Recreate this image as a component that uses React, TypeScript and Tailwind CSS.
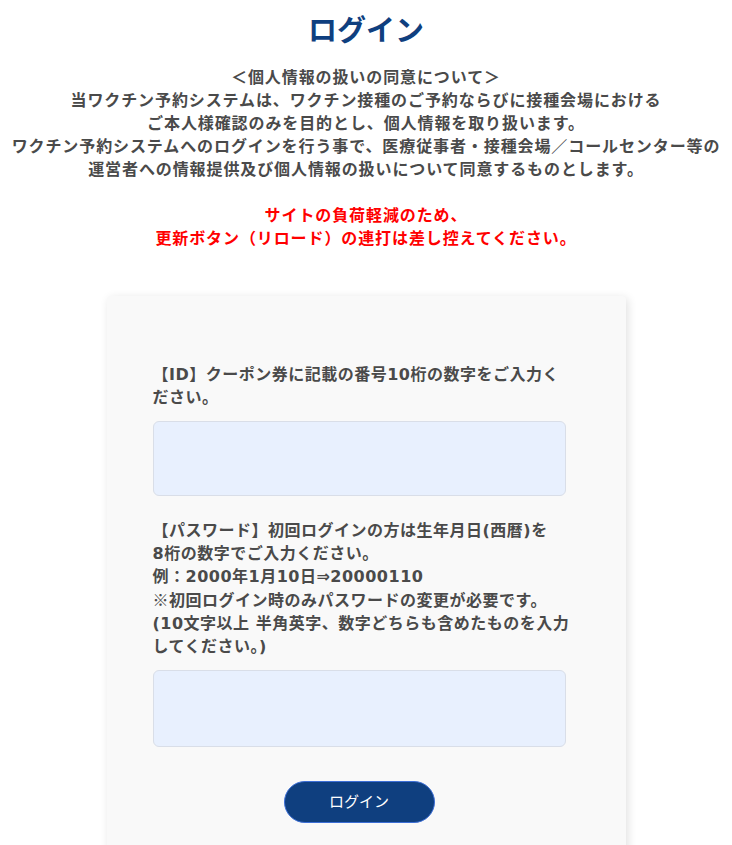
import React from "react";

const font = { fontFamily: '"DejaVu Sans", "Noto Sans CJK JP", sans-serif' };

export default function App() {
  return (
    <div className="min-h-screen bg-white text-[#4a4a4a]" style={font}>
      <div className="pt-[11px] text-center">
        <h1 className="text-[29px] font-bold leading-[40px] text-[#0f3f7f]">ログイン</h1>

        <p className="mt-[15px] text-[16px] font-bold leading-[23px] tracking-[0.9px]">
          ＜個人情報の扱いの同意について＞
          <br />
          当ワクチン予約システムは、ワクチン接種のご予約ならびに接種会場における
          <br />
          ご本人様確認のみを目的とし、個人情報を取り扱います。
          <br />
          ワクチン予約システムへのログインを行う事で、医療従事者・接種会場／コールセンター等の
          <br />
          運営者への情報提供及び個人情報の扱いについて同意するものとします。
          <br />
          <br />
          <span className="text-[#ff0000]">
            サイトの負荷軽減のため、
            <br />
            更新ボタン（リロード）の連打は差し控えてください。
          </span>
        </p>
      </div>

      <div className="mx-auto mt-[46px] w-[519px] rounded-[4px] bg-[#f9f9f9] pl-[46px] pt-[67px] pb-[40px] shadow-[2px_2px_10px_rgba(0,0,0,0.12)]">
        <form className="w-[413px]" onSubmit={(e) => e.preventDefault()}>
          <label className="block w-[450px] whitespace-nowrap text-[16px] font-bold leading-[23px] tracking-[0.5px]">
            【ID】クーポン券に記載の番号10桁の数字をご入力く
            <br />
            ださい。
          </label>
          <input
            type="text"
            className="mt-[12px] block h-[75px] w-[413px] rounded-[6px] border border-[#d9dee8] bg-[#e8f0fe] px-3 outline-none"
          />

          <label className="mt-[23px] block w-[450px] whitespace-nowrap text-[16px] font-bold leading-[23px] tracking-[0.5px]">
            【パスワード】初回ログインの方は生年月日(西暦)を
            <br />
            8桁の数字でご入力ください。
            <br />
            例：2000年1月10日⇒20000110
            <br />
            <span style={{ fontFamily: '"Noto Sans CJK JP", sans-serif' }}>※</span>初回ログイン時のみパスワードの変更が必要です。
            <br />
            (10文字以上 半角英字、数字どちらも含めたものを入力
            <br />
            してください。)
          </label>
          <input
            type="password"
            className="mt-[12px] block h-[77px] w-[413px] rounded-[6px] border border-[#d9dee8] bg-[#e8f0fe] px-3 outline-none"
          />

          <div className="mt-[34px] flex justify-center">
            <button
              type="submit"
              className="h-[42px] w-[151px] rounded-full border border-[#3d6fd6] bg-[#0f3f7f] text-[15px] text-white"
            >
              ログイン
            </button>
          </div>
        </form>
      </div>
    </div>
  );
}
